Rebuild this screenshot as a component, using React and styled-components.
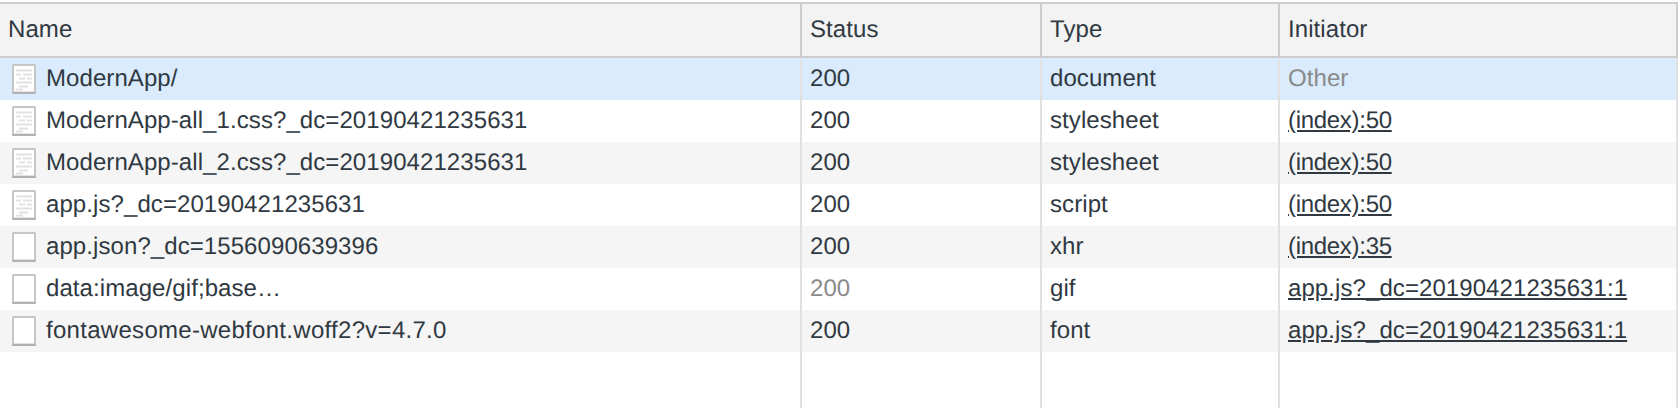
import React from 'react'
import styled, { createGlobalStyle } from 'styled-components'

const rows = [
	{ name: 'ModernApp/', status: '200', type: 'document', initiator: 'Other', icon: 'doc', selected: true },
	{ name: 'ModernApp-all_1.css?_dc=20190421235631', status: '200', type: 'stylesheet', initiator: '(index):50', link: true, tight: true, icon: 'doc' },
	{ name: 'ModernApp-all_2.css?_dc=20190421235631', status: '200', type: 'stylesheet', initiator: '(index):50', link: true, tight: true, icon: 'doc' },
	{ name: 'app.js?_dc=20190421235631', status: '200', type: 'script', initiator: '(index):50', link: true, tight: true, icon: 'doc' },
	{ name: 'app.json?_dc=1556090639396', status: '200', type: 'xhr', initiator: '(index):35', link: true, tight: true },
	{ name: 'data:image/gif;base…', status: '200', dimStatus: true, type: 'gif', initiator: 'app.js?_dc=20190421235631:1', link: true },
	{ name: 'fontawesome-webfont.woff2?v=4.7.0', wide: true, status: '200', type: 'font', initiator: 'app.js?_dc=20190421235631:1', link: true },
]

const FileIcon = ({ lines }) => (
	<StyledIcon viewBox="0 0 24 30" aria-hidden="true">
		<path d="M0 1.5A1.5 1.5 0 0 1 1.5 0h21A1.5 1.5 0 0 1 24 1.5v27a1.5 1.5 0 0 1-1.5 1.5h-21A1.5 1.5 0 0 1 0 28.5z" fill="#c6c6c6" />
		<rect x="2" y="2" width="20" height="25.5" fill="#fff" />
		<path d="M0 28h24v.5a1.5 1.5 0 0 1-1.5 1.5h-21A1.5 1.5 0 0 1 0 28.5z" fill="#a9a9a9" opacity="0.7" />
		{lines && (
			<path d="M4 6.5h16M4 10.5h5M11 10.5h9M7 14.5h6M15 14.5h5M4 18.5h16M7 22.5h9M4 25.5h7" stroke="#e2e2e2" strokeWidth="2" />
		)}
	</StyledIcon>
)

const App = () => (
	<>
		<GlobalStyle />
		<Table>
			<HeaderRow>
				<HeaderCell>Name</HeaderCell>
				<HeaderCell>Status</HeaderCell>
				<HeaderCell>Type</HeaderCell>
				<HeaderCell>Initiator</HeaderCell>
			</HeaderRow>
			{rows.map((row, i) => (
				<Row key={row.name} selected={row.selected} striped={i % 2 === 0}>
					<NameCell track={row.wide ? '0.29px' : undefined}>
						<FileIcon lines={row.icon === 'doc'} />
						{row.name}
					</NameCell>
					<Cell dim={row.dimStatus}>{row.status}</Cell>
					<Cell>{row.type}</Cell>
					<Cell dim={!row.link} link={row.link} track={row.tight ? '-0.3px' : undefined}>
						{row.initiator}
					</Cell>
				</Row>
			))}
			<Filler>
				<FillerCol />
				<FillerCol />
				<FillerCol />
				<FillerCol />
			</Filler>
		</Table>
	</>
)

export default App

const GlobalStyle = createGlobalStyle`
	html, body {
		margin: 0;
		padding: 0;
		background: #fff;
	}
`
const Table = styled.div`
	display: flex;
	flex-direction: column;
	width: 1678px;
	height: 408px;
	box-sizing: border-box;
	padding-top: 2px;
	overflow: hidden;
	font-family: 'Liberation Sans', Arial, sans-serif;
	font-size: 24px;
	text-rendering: geometricPrecision;
	color: #303942;
`
const columns = `
	display: grid;
	grid-template-columns: 802px 240px 238px 398px;
`
const HeaderRow = styled.div`
	${columns}
	height: 56px;
	box-sizing: border-box;
	background: #f3f3f3;
	border-top: 2px solid #cdcdcd;
	border-bottom: 2px solid #cdcdcd;
`
const HeaderCell = styled.div`
	display: flex;
	align-items: center;
	padding-left: 8px;
	letter-spacing: 0.08px;
	border-right: 2px solid #cdcdcd;
`
const Row = styled.div`
	${columns}
	height: 42px;
	background: ${props => (props.selected ? '#d9ebfc' : props.striped ? '#f5f5f5' : '#fff')};
`
const Cell = styled.div`
	display: flex;
	align-items: center;
	padding-left: 8px;
	white-space: nowrap;
	letter-spacing: ${props => props.track || '0.08px'};
	border-right: 2px solid #e1e1e1;
	color: ${props => (props.dim ? '#8a8a8a' : '#303942')};
	text-decoration: ${props => (props.link ? 'underline' : 'none')};
`
const NameCell = styled(Cell)`
	padding-left: 12px;
	gap: 10px;
`
const StyledIcon = styled.svg`
	width: 24px;
	height: 30px;
	flex: none;
`
const Filler = styled.div`
	${columns}
	flex: 1;
`
const FillerCol = styled.div`
	border-right: 2px solid #e1e1e1;
`
